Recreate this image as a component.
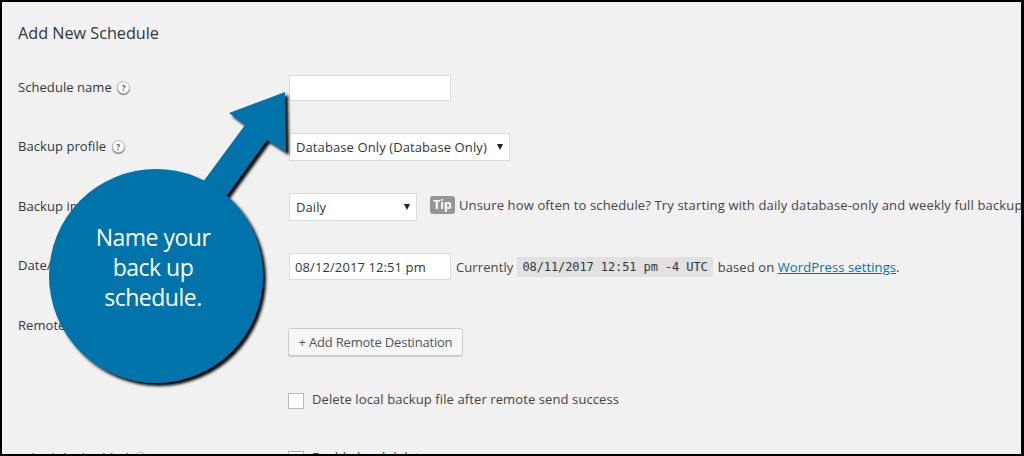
<div class="frame">
  <h2>Add New Schedule</h2>
  <div class="form">
    <div class="row r1">
      <div class="label">Schedule name <span class="help">?</span></div>
      <div class="field"><div class="input name"></div></div>
    </div>
    <div class="row r2">
      <div class="label">Backup profile <span class="help">?</span></div>
      <div class="field"><div class="input select profile"><span>Database Only (Database Only)</span><i class="caret"></i></div></div>
    </div>
    <div class="row r3">
      <div class="label">Backup interval</div>
      <div class="field">
        <div class="input select daily"><span>Daily</span><i class="caret"></i></div>
        <span class="tip">Tip</span>
        <span class="unsure">Unsure how often to schedule? Try starting with daily database-only and weekly full backups.</span>
      </div>
    </div>
    <div class="row r4">
      <div class="label">Date/Time</div>
      <div class="field">
        <div class="input date">08/12/2017 12:51 pm</div>
        <span class="cur">Currently</span>
        <code>08/11/2017 12:51 pm -4 UTC</code>
        <span class="based">based on <a href="#settings">WordPress settings</a>.</span>
      </div>
    </div>
    <div class="row r5">
      <div class="label">Remote destinations</div>
      <div class="field"><div class="btn">+ Add Remote Destination</div></div>
    </div>
    <div class="row r6">
      <div class="label"></div>
      <div class="field"><span class="check"></span><span class="checktext">Delete local backup file after remote send success</span></div>
    </div>
    <div class="row r7">
      <div class="label">Schedule disabled <span class="help">?</span></div>
      <div class="field"><span class="check"></span><span class="checktext">Enable local delete</span></div>
    </div>
  </div>

  <svg class="callout" width="1024" height="456" viewBox="0 0 1024 456" aria-hidden="true">
    <defs>
      <filter id="sh" x="-20%" y="-20%" width="140%" height="140%">
        <feDropShadow dx="3" dy="3" stdDeviation="1.6" flood-color="#000" flood-opacity="1" />
      </filter>
    </defs>
    <g filter="url(#sh)" fill="#0073aa">
      <path d="M285 92 L229 113 L245 125 L200 186 L222 202 L267 140 L286 152 Z" />
      <circle cx="156" cy="276" r="107" />
    </g>
  </svg>
  <div class="bubble">Name your<br />back up<br />schedule.</div>
</div>

<style>
  :global(body) { margin: 0; background: #000; }
  .frame {
    position: relative;
    box-sizing: border-box;
    width: 1024px;
    height: 456px;
    overflow: hidden;
    background: #f1f1f1;
    border: solid #000;
    border-width: 2px 3px 2px 2px;
    color: #444;
    font: 13px/18px "Open Sans", "Noto Sans", sans-serif;
    letter-spacing: 0.1px;
  }
  h2 {
    margin: 0;
    padding: 20px 0 0 16px;
    height: 22px;
    font-size: 16.2px;
    line-height: 22px;
    font-weight: 400;
    letter-spacing: 0;
    color: #32373c;
  }
  .form { padding-top: 31px; }
  .row { display: flex; }
  .r1 { height: 58px; }
  .r2 { height: 60px; }
  .r3 { height: 60px; }
  .r4 { height: 60px; }
  .r5 { height: 80px; }
  .r6 { height: 58px; }
  .label { width: 287px; flex: none; box-sizing: border-box; padding: 3px 0 0 16px; color: #32373c; white-space: nowrap; letter-spacing: 0.06px; }
  .r2 .label, .r3 .label { padding-top: 4px; }
  .r7 .label { padding-top: 0; margin-top: -2px; }
  .field { display: flex; align-items: flex-start; white-space: nowrap; }
  .r5 .field { padding-top: 15px; }
  .help {
    display: inline-block;
    box-sizing: border-box;
    width: 13px; height: 13px;
    margin-left: 2px;
    border-radius: 50%;
    background: #fdfdfd;
    border: 1px solid #bbb;
    box-shadow: 0 1px 1px #777;
    color: #555;
    font-size: 8px;
    font-weight: 700;
    line-height: 11px;
    text-align: center;
    vertical-align: 1px;
    letter-spacing: 0;
  }
  .input {
    box-sizing: border-box;
    background: #fff;
    border: 1px solid #ddd;
    color: #32373c;
    font-size: 13px;
  }
  .name { width: 162px; height: 26px; }
  .select { display: flex; align-items: center; justify-content: space-between; height: 28px; padding: 0 6px; }
  .profile { width: 221px; }
  .daily { width: 128px; }
  .caret {
    width: 0; height: 0;
    border-left: 3px solid transparent;
    border-right: 3px solid transparent;
    border-top: 6px solid #222;
  }
  .tip {
    margin: 3px 4px 0 13px;
    width: 25px; height: 18px;
    border-radius: 3px;
    background: #959595;
    color: #fff;
    font-weight: 700;
    font-size: 12px;
    line-height: 18px;
    text-align: center;
  }
  .unsure { margin-top: 3px; letter-spacing: 0.14px; }
  .date { width: 162px; height: 27px; padding: 0 5px; line-height: 26px; }
  .cur { margin: 5px 4px 0 5px; }
  code {
    margin-top: 4px;
    padding: 0 5px;
    height: 20px;
    background: #e1e1e1;
    color: #32373c;
    font: 12px/20px "DejaVu Sans Mono", monospace;
    letter-spacing: -0.1px;
  }
  .based { margin: 5px 0 0 5px; }
  a { color: #0073aa; }
  .btn {
    box-sizing: border-box;
    margin-left: -1px;
    width: 175px; height: 28px;
    background: #f7f7f7;
    border: 1px solid #ccc;
    border-radius: 3px;
    box-shadow: 0 1px 0 #ccc;
    color: #555;
    line-height: 26px;
    letter-spacing: -0.2px;
    text-align: center;
  }
  .check {
    box-sizing: border-box;
    flex: none;
    margin: 0 8px 0 -1px;
    width: 16px; height: 16px;
    background: #fff;
    border: 1px solid #b4b9be;
  }
  .checktext { margin-top: -3px; }
  .callout { position: absolute; left: -2px; top: -2px; }
  .bubble {
    position: absolute;
    left: 51px; top: 220px;
    width: 200px;
    text-align: center;
    color: #fff;
    font-size: 23px;
    line-height: 30px;
    letter-spacing: -0.5px;
  }
</style>
